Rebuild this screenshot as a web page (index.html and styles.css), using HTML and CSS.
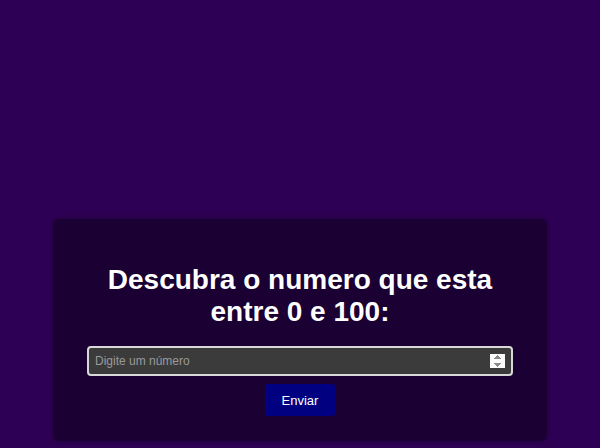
FILE: index.html
```html
<!DOCTYPE html>
<html lang="pt">
<head>
<meta charset="utf-8">
<title>Descubra o numero</title>
<link rel="stylesheet" href="styles.css">
</head>
<body>
<main class="card">
  <h1 class="title">Descubra o numero que esta entre 0 e 100:</h1>
  <input class="guess" type="number" placeholder="Digite um número">
  <button class="send" type="button">Enviar</button>
</main>
</body>
</html>
```

FILE: styles.css
```css
html, body {
  margin: 0;
  height: 100%;
}
body {
  background: #2e0055;
  font-family: "Liberation Sans", Arial, sans-serif;
  display: flex;
  flex-direction: column;
  align-items: center;
  padding-top: 219px;
  box-sizing: border-box;
}
.card {
  width: 494px;
  height: 222px;
  box-sizing: border-box;
  background: #1a0033;
  border-radius: 6px;
  box-shadow: 0 0 6px rgba(0, 0, 0, 0.35);
  padding: 45px 34px 0;
  display: flex;
  flex-direction: column;
  align-items: center;
}
.title {
  margin: 0;
  color: #ffffff;
  font-size: 28px;
  font-weight: bold;
  line-height: 32px;
  text-align: center;
}
.guess {
  margin-top: 18px;
  width: 100%;
  height: 30px;
  box-sizing: border-box;
  background: #3b3b3b;
  border: 2px solid #d9d9d9;
  border-radius: 4px;
  color: #ffffff;
  font-family: "Liberation Sans", Arial, sans-serif;
  font-size: 12px;
  padding: 0 6px;
  outline: none;
}
.guess::placeholder {
  color: #9a9a9a;
}
.guess::-webkit-inner-spin-button {
  opacity: 1;
}
.send {
  margin-top: 8px;
  width: 70px;
  height: 32px;
  background: #000080;
  color: #ffffff;
  border: none;
  border-radius: 3px;
  font-family: "Liberation Sans", Arial, sans-serif;
  font-size: 13px;
}
```
